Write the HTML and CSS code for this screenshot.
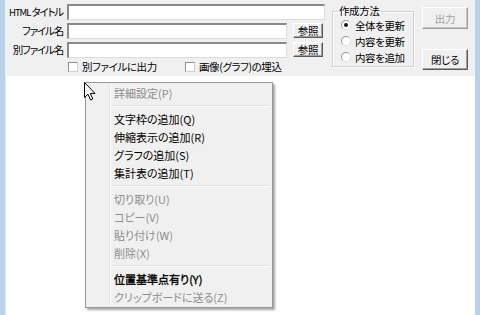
FILE: index.html
```html
<!DOCTYPE html>
<html lang="ja">
<head>
  <meta charset="UTF-8" />
  <title>HTML出力</title>
  <link rel="stylesheet" href="styles.css">
</head>
<body>

<div class="client">
  <div class="panel">
    <div class="fields">
      <label class="lbl"><span class="latin">HTML</span>タイトル</label>
      <div class="field"><span class="edit wide"></span></div>

      <label class="lbl">ファイル名</label>
      <div class="field"><span class="edit"></span><button class="btn ref">参照</button></div>

      <label class="lbl">別ファイル名</label>
      <div class="field"><span class="edit"></span><button class="btn ref">参照</button></div>

      <div class="checks">
        <span class="check first"><i class="box"></i>別ファイルに出力</span>
        <span class="check"><i class="box"></i>画像(グラフ)の埋込</span>
      </div>
    </div>

    <fieldset class="group">
      <legend>作成方法</legend>
      <div class="radio"><i class="dot on"></i>全体を更新</div>
      <div class="radio"><i class="dot"></i>内容を更新</div>
      <div class="radio"><i class="dot"></i>内容を追加</div>
    </fieldset>

    <div class="actions">
      <button class="btn big" disabled>出力</button>
      <button class="btn big">閉じる</button>
    </div>
  </div>
</div>

<!-- context menu -->
<div class="menu">
  <div class="item off">詳細設定(P)</div>
  <div class="sep"></div>
  <div class="item">文字枠の追加(Q)</div>
  <div class="item">伸縮表示の追加(R)</div>
  <div class="item">グラフの追加(S)</div>
  <div class="item">集計表の追加(T)</div>
  <div class="sep"></div>
  <div class="item off">切り取り(U)</div>
  <div class="item off">コピー(V)</div>
  <div class="item off">貼り付け(W)</div>
  <div class="item off">削除(X)</div>
  <div class="sep"></div>
  <div class="item bold">位置基準点有り(Y)</div>
  <div class="item off">クリップボードに送る(Z)</div>
</div>

<svg class="cursor" width="13" height="19" viewBox="0 0 13 19">
  <path d="M0.5 0.5 L0.5 15.5 L4 12.2 L6.6 18 L8.8 17 L6.3 11.4 L11 11.4 Z" fill="#fff" stroke="#000" stroke-width="1" stroke-linejoin="miter"/>
</svg>

</body>
</html>
```

FILE: styles.css
```css
html, body {
  margin: 0;
  height: 100%;
}

body {
  background: #b9d1ea;
  font-family: "Noto Sans CJK JP", "Noto Sans", sans-serif;
  font-size: 11px;
  font-feature-settings: "palt";
  color: #000;
  overflow: hidden;
}

.client {
  margin: 0 5px;
  height: 100%;
  background: #fff;
  border-left: 1px solid #dbe6f3;
  box-sizing: border-box;
}

.panel {
  display: flex;
  align-items: flex-start;
  height: 76px;
  padding-top: 4px;
  box-sizing: border-box;
  background: #f0f0f0;
  margin-left: -1px;
  font-size: 10.5px;
  letter-spacing: -0.4px;
}

.fields {
  display: grid;
  grid-template-columns: 59px 258px;
  column-gap: 3px;
  row-gap: 3px;
  width: 320px;
}

.lbl {
  display: flex;
  justify-content: flex-end;
  line-height: 16px;
  height: 16px;
  white-space: nowrap;
  letter-spacing: -1.2px;
  padding-right: 1px;
}

.lbl .latin {
  font-size: 9.5px;
  letter-spacing: -1px;
  margin-right: 1px;
}

.field {
  display: flex;
  height: 16px;
}

.edit {
  display: block;
  width: 220px;
  height: 16px;
  box-sizing: border-box;
  background: #fff;
  border-top: 2px solid #8a8a8a;
  border-left: 2px solid #8a8a8a;
  border-right: 1px solid #dcdcdc;
  border-bottom: 1px solid #dcdcdc;
}

.edit.wide {
  width: 258px;
}

.btn {
  font: inherit;
  font-feature-settings: "palt";
  letter-spacing: -0.3px;
  background: #f0f0f0;
  color: #000;
  padding: 0;
  box-sizing: border-box;
  border: 1px solid;
  border-color: #fff #5a5a5a #5a5a5a #fff;
  box-shadow: inset -1px -1px #a0a0a0;
  cursor: default;
}

.btn.ref {
  width: 30px;
  height: 15px;
  line-height: 13px;
  margin-left: 6px;
}

.btn:disabled {
  color: #a3a3a3;
  border-color: #fff #9a9a9a #9a9a9a #fff;
  box-shadow: inset -1px -1px #c8c8c8;
}

.checks {
  grid-column: 2;
  display: flex;
  height: 12px;
  line-height: 12px;
}

.check {
  display: flex;
  align-items: center;
  white-space: nowrap;
}

.check.first {
  width: 117px;
}

.box {
  display: block;
  width: 10px;
  height: 10px;
  box-sizing: border-box;
  margin: 0 4px 0 1px;
  background: #fff;
  border: 1px solid #8f8f8f;
  border-right-color: #cfcfcf;
  border-bottom-color: #cfcfcf;
}

.group {
  margin: 0 0 0 7px;
  padding: 0 0 0 8px;
  width: 82px;
  height: 63px;
  box-sizing: border-box;
  border: 1px solid #d0d0d0;
  box-shadow: 1px 1px #fff, inset 1px 1px #fff;
}

.group legend {
  padding: 0 1px;
  margin-left: -3px;
  line-height: 14px;
}

.radio {
  display: flex;
  align-items: center;
  height: 16px;
  white-space: nowrap;
}

.radio:first-of-type {
  margin-top: -1px;
}

.dot {
  display: block;
  position: relative;
  width: 10px;
  height: 10px;
  box-sizing: border-box;
  margin-right: 4px;
  border-radius: 50%;
  background: #fff;
  border: 1px solid #9a9a9a;
  border-right-color: #e0e0e0;
  border-bottom-color: #e0e0e0;
}

.dot.on::after {
  content: "";
  position: absolute;
  left: 2px;
  top: 2px;
  width: 4px;
  height: 4px;
  border-radius: 50%;
  background: #111;
}

.actions {
  display: flex;
  flex-direction: column;
  margin-left: 8px;
  padding-top: 3px;
  gap: 20px;
}

.btn.big {
  width: 46px;
  height: 22px;
}

.btn.big + .btn.big {
  height: 21px;
}

/* context menu */
.menu {
  position: absolute;
  left: 85px;
  top: 82px;
  width: 188px;
  box-sizing: border-box;
  padding: 1px;
  background: #f0f0f0;
  border: 1px solid #979797;
  box-shadow: 2px 2px 2px rgba(0, 0, 0, 0.35);
}

.menu::before {
  content: "";
  position: absolute;
  left: 23px;
  top: 1px;
  bottom: 1px;
  width: 1px;
  background: #e2e3e3;
  border-right: 1px solid #fff;
}

.item {
  position: relative;
  height: 18px;
  line-height: 18px;
  padding-left: 27px;
  white-space: nowrap;
}

.item.off {
  color: #8d8d8d;
}

.item.bold {
  -webkit-text-stroke: 0.35px #000;
}

.sep {
  position: relative;
  height: 8px;
}

.sep::after {
  content: "";
  position: absolute;
  left: 25px;
  right: 1px;
  top: 3px;
  height: 1px;
  background: #e0e0e0;
  border-bottom: 1px solid #fff;
}

.cursor {
  position: absolute;
  left: 84px;
  top: 82px;
}
```
